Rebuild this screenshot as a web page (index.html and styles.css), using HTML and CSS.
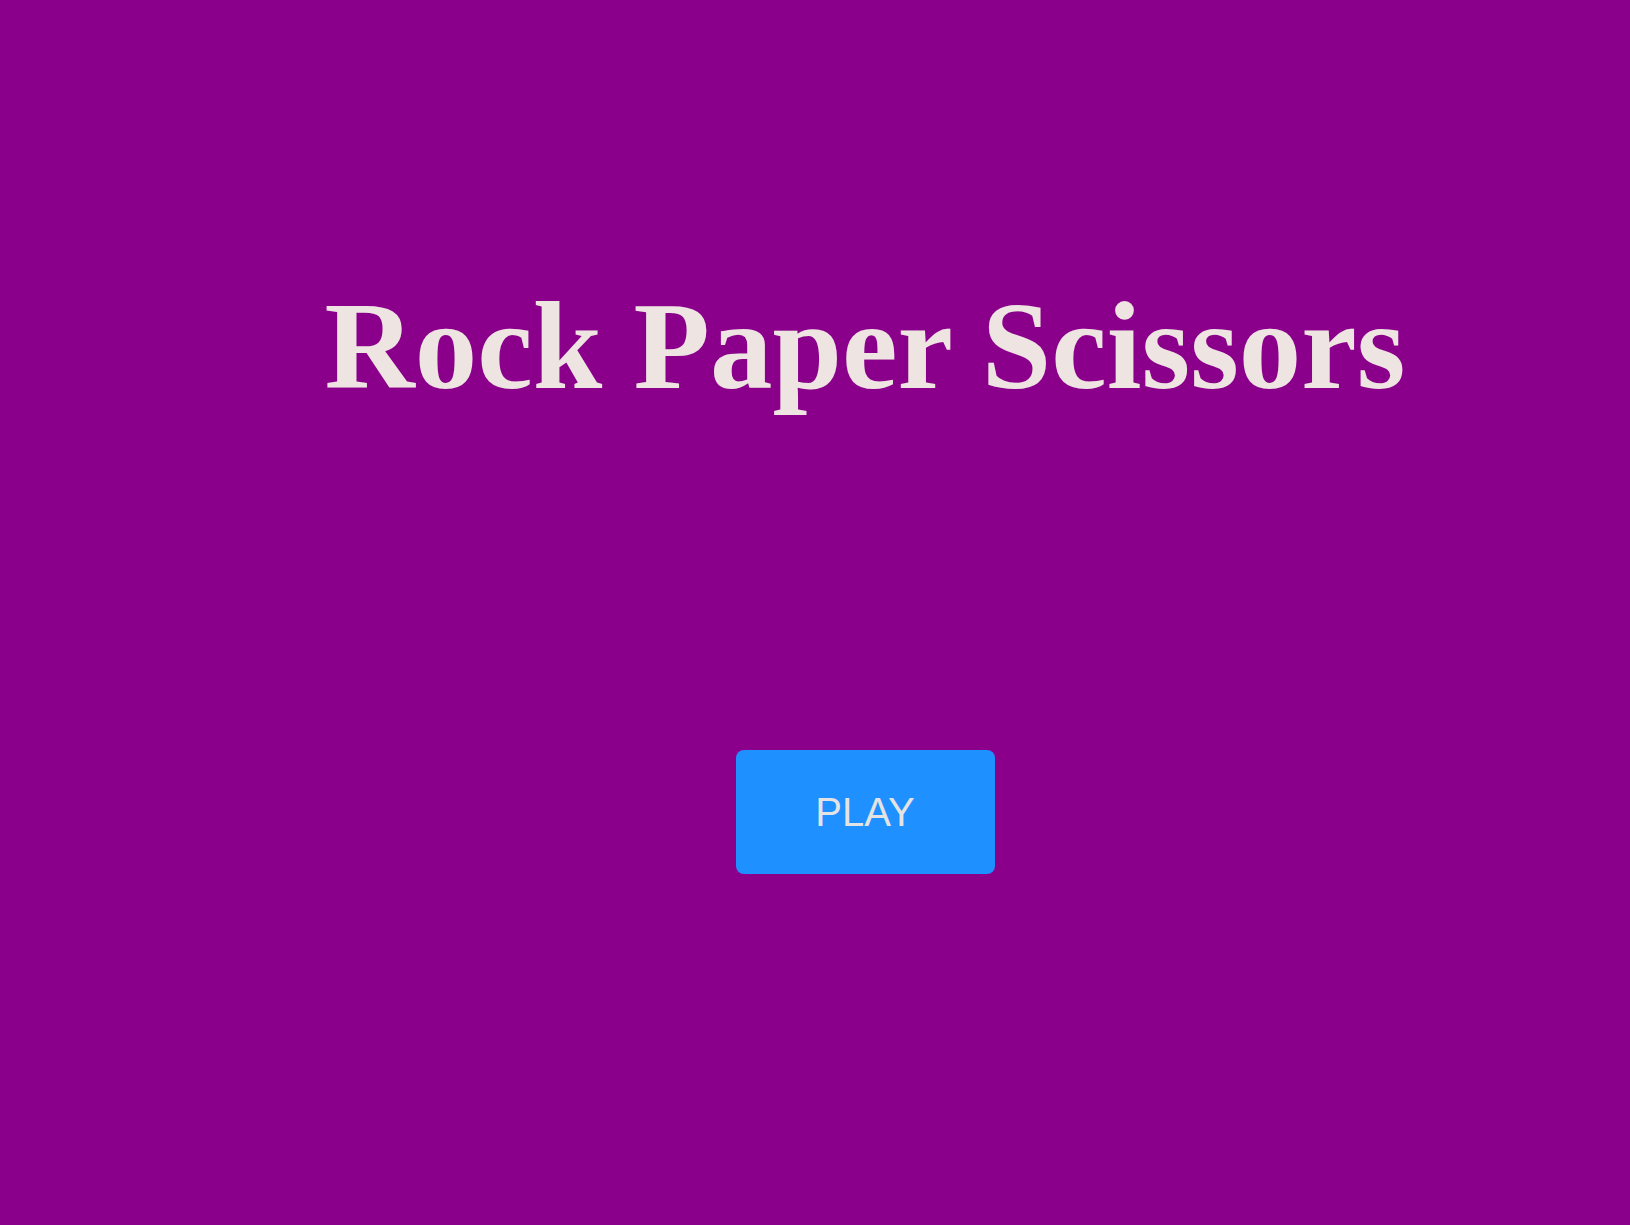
FILE: index.html
```html
<!DOCTYPE html>
<html>
<head>
<meta charset="utf-8">
<link rel="stylesheet" href="styles.css">
</head>
<body>
<main class="screen">
  <h1 class="title">Rock Paper Scissors</h1>
  <button class="play">PLAY</button>
</main>
</body>
</html>
```
FILE: styles.css
```css
html, body {
  margin: 0;
  padding: 0;
  height: 100%;
}
body {
  background: #8b008b;
}
.screen {
  display: flex;
  flex-direction: column;
  align-items: center;
  padding-left: 100px;
  padding-top: 276px;
  box-sizing: border-box;
}
.title {
  margin: 0;
  font-family: "Liberation Serif", "Times New Roman", serif;
  font-weight: bold;
  font-size: 125px;
  line-height: 140px;
  color: #eee4e1;
}
.play {
  margin-top: 334px;
  width: 259px;
  height: 124px;
  border: none;
  border-radius: 8px;
  background: #1e90ff;
  color: #e3e3e3;
  font-family: "Liberation Sans", Arial, sans-serif;
  font-size: 40px;
}
```
